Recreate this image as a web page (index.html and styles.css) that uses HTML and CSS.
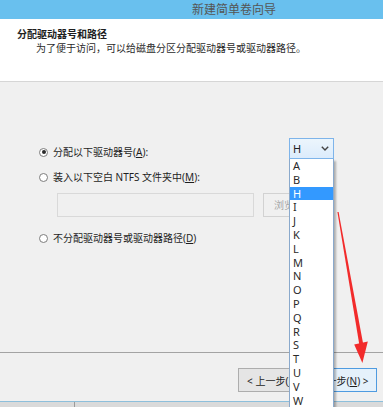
FILE: index.html
```html
<!DOCTYPE html>
<html lang="zh-CN">
<head>
    <meta charset="UTF-8">
    <meta name="viewport" content="width=device-width, initial-scale=1.0">
    <title>新建简单卷向导</title>
    <link rel="stylesheet" href="styles.css">
</head>
<body>
    <div class="wizard">
        <div class="titlebar">新建简单卷向导</div>

        <div class="wizard-header">
            <div class="header-title">分配驱动器号和路径</div>
            <div class="header-desc">为了便于访问，可以给磁盘分区分配驱动器号或驱动器路径。</div>
        </div>

        <div class="wizard-content">
            <div class="option option-letter">
                <label class="radio-label"><span class="radio checked"></span>分配以下驱动器号(<u>A</u>):</label>
                <div class="combo">
                    <div class="combo-box">
                        <span>H</span>
                        <svg class="chevron" width="8" height="5" viewBox="0 0 8 5"><polyline points="0.8,0.8 4,4 7.2,0.8" fill="none" stroke="#444" stroke-width="1.4"/></svg>
                    </div>
                    <ul class="combo-list">
                        <li>A</li>
                        <li>B</li>
                        <li class="selected">H</li>
                        <li>I</li>
                        <li>J</li>
                        <li>K</li>
                        <li>L</li>
                        <li>M</li>
                        <li>N</li>
                        <li>O</li>
                        <li>P</li>
                        <li>Q</li>
                        <li>R</li>
                        <li>S</li>
                        <li>T</li>
                        <li>U</li>
                        <li>V</li>
                        <li>W</li>
                    </ul>
                </div>
            </div>

            <div class="option">
                <label class="radio-label"><span class="radio"></span>装入以下空白 NTFS 文件夹中(<u>M</u>):</label>
            </div>

            <div class="path-row">
                <div class="path-input"></div>
                <div class="browse-button">浏览(<u>R</u>)...</div>
            </div>

            <div class="option option-none">
                <label class="radio-label"><span class="radio"></span>不分配驱动器号或驱动器路径(<u>D</u>)</label>
            </div>
        </div>

        <div class="wizard-footer">
            <button class="wizard-button">&lt; 上一步(<u>B</u>)</button>
            <button class="wizard-button default">下一步(<u>N</u>) &gt;</button>
        </div>

        <div class="taskbar"><span class="taskbar-sep"></span></div>
    </div>

    <!-- red hint arrow drawn over the screenshot -->
    <svg class="hint-arrow" width="383" height="407" viewBox="0 0 383 407">
        <polygon points="337.4,212 338.6,212 363.2,344 359.2,344" fill="#f22b2b"/>
        <polygon points="354.2,344.5 367.8,341.5 362.4,363" fill="#f22b2b"/>
    </svg>
</body>
</html>
```

FILE: styles.css
```css
/* Base styles */
body {
    margin: 0;
    width: 383px;
    height: 407px;
    overflow: hidden;
    position: relative;
    background: #f0f0f0;
    font-family: "Noto Sans", "Noto Sans CJK SC", sans-serif;
    font-size: 10px;
    color: #1e1e1e;
}

.wizard {
    display: flex;
    flex-direction: column;
}

/* Title bar */
.titlebar {
    height: 19px;
    line-height: 17px;
    padding-left: 192px;
    background: #69c0ee;
    color: #555;
    font-family: "Noto Sans CJK SC", sans-serif;
    font-size: 12px;
}

/* Header */
.wizard-header {
    height: 54px;
    padding-top: 8px;
    background: white;
    border-bottom: 1px solid #d6d6d6;
    font-family: "Noto Sans CJK SC", sans-serif;
}

.header-title {
    padding-left: 17px;
    line-height: 14px;
    font-weight: bold;
}

.header-desc {
    padding-left: 36px;
    line-height: 14px;
    color: #2a2a2a;
}

/* Content */
.wizard-content {
    height: 214px;
    padding: 56px 49px 0 39px;
    border-bottom: 1px solid #a3a3a3;
}

.option {
    display: flex;
    align-items: center;
    height: 16px;
    margin-top: 10px;
}

.option-letter {
    align-items: flex-start;
    justify-content: space-between;
    height: 21px;
    margin-top: 0;
}

.option-letter .radio-label {
    margin-top: 6px;
}

.option-none {
    margin-top: 13px;
}

.radio-label {
    display: flex;
    align-items: center;
    line-height: 16px;
}

.radio {
    width: 7px;
    height: 7px;
    margin-right: 5px;
    border: 1px solid #7d7d7d;
    border-radius: 50%;
    background: white;
    display: flex;
    align-items: center;
    justify-content: center;
}

.radio.checked::after {
    content: "";
    width: 4px;
    height: 4px;
    border-radius: 50%;
    background: #2b2b2b;
}

/* Folder path */
.path-row {
    display: flex;
    margin: 8px 0 0 18px;
}

.path-input {
    flex-shrink: 0;
    width: 195px;
    height: 22px;
    border: 1px solid #d9d9d9;
    background: #f0f0f0;
}

.browse-button {
    flex-shrink: 0;
    width: 56px;
    height: 22px;
    margin-left: 9px;
    padding-left: 10px;
    border: 1px solid #d2d2d2;
    background: #f0f0f0;
    color: #a8a8a8;
    line-height: 22px;
}

/* Drive letter combo */
.combo {
    position: relative;
    width: 45px;
}

.combo-box {
    height: 19px;
    border: 1px solid #7eb4ea;
    background: linear-gradient(#ecf5fc, #dcecfc);
    display: flex;
    align-items: center;
    justify-content: space-between;
    padding: 0 4px 0 3px;
    font-size: 11px;
    color: #222;
}

.combo-list {
    position: absolute;
    top: 21px;
    left: 0;
    width: 43px;
    margin: 0;
    padding: 0;
    list-style: none;
    background: white;
    border: 1px solid #8aa9cc;
    border-top: none;
    box-shadow: 2px 2px 2px rgba(0,0,0,0.28);
    z-index: 10;
}

.combo-list li {
    height: 13.8px;
    line-height: 13.8px;
    padding-left: 3px;
    font-size: 11px;
    color: #2a2a2a;
}

.combo-list li.selected {
    background: #3399ff;
    color: white;
}

/* Footer buttons */
.wizard-footer {
    height: 33px;
    padding: 15px 6px 0 0;
    display: flex;
    justify-content: flex-end;
    gap: 1px;
}

.wizard-button {
    width: 69px;
    height: 24px;
    padding: 0;
    border: 1px solid #adadad;
    background: #e5e5e5;
    font-family: "Noto Sans", "Noto Sans CJK SC", sans-serif;
    font-size: 10px;
    color: #1e1e1e;
}

.wizard-button.default {
    border-color: #4f9be0;
    background: #e5f1fb;
}

/* Taskbar strip */
.taskbar {
    height: 5px;
    border-top: 1px solid #8dbfdb;
    background: #dadada;
    padding-left: 74px;
}

.taskbar-sep {
    display: block;
    width: 1px;
    height: 5px;
    background: #9a9a9a;
}

/* Hint arrow */
.hint-arrow {
    position: absolute;
    top: 0;
    left: 0;
    z-index: 20;
}
```
